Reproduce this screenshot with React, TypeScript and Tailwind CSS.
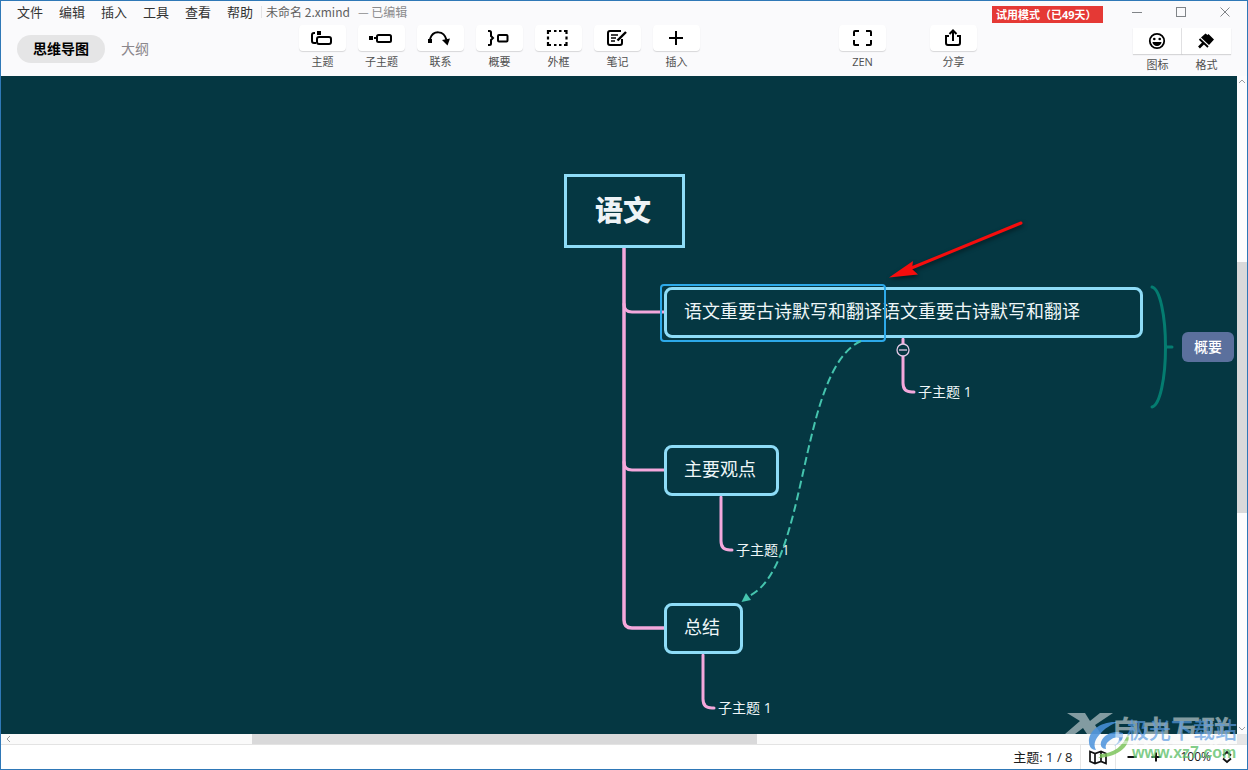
import { useState } from "react";
import type { ReactNode } from "react";
import { clsx } from "clsx";

// ── Data ───────────────────────────────────────────────────────
const MENUS = ["文件", "编辑", "插入", "工具", "查看", "帮助"];

const TOOLS: { label: string; icon: ReactNode }[] = [
  {
    label: "主题",
    icon: (
      <>
        <rect x="7" y="2" width="4" height="4" fill="currentColor" stroke="none" />
        <path d="M5 4H4a2 2 0 0 0-2 2v6a2 2 0 0 0 2 2h2" />
        <rect x="7" y="8" width="14" height="7" rx="2" />
      </>
    ),
  },
  {
    label: "子主题",
    icon: (
      <>
        <rect x="0" y="7" width="4" height="4" fill="currentColor" stroke="none" />
        <path d="M5 9h2" />
        <rect x="8" y="6" width="14" height="7" rx="1.5" />
      </>
    ),
  },
  {
    label: "联系",
    icon: (
      <>
        <rect x="0" y="10" width="4" height="4" fill="currentColor" stroke="none" />
        <path d="M2 10C5 1 16 1 18.500 11" />
        <path d="M14 11l8-1.500-2.500 7z" fill="currentColor" stroke="none" />
      </>
    ),
  },
  {
    label: "概要",
    icon: (
      <>
        <path d="M1 2h1.500a1.500 1.500 0 0 1 1.500 1.500v3.500l2 2-2 2v3.500a1.500 1.500 0 0 1-1.500 1.500H1" />
        <rect x="11" y="6" width="9.500" height="6.500" rx="1" />
      </>
    ),
  },
  {
    label: "外框",
    icon: (
      <path
        strokeWidth="2.200"
        d="M2 5V2h3M8 2h2.500M13 2h2.500M18 2h2.500v3M20.500 7.500v3M20.500 13v3h-2.500M15.500 16H13M10.500 16H8M5 16H2v-3M2 10.500v-3"
      />
    ),
  },
  {
    label: "笔记",
    icon: (
      <>
        <path d="M16 2H5a2 2 0 0 0-2 2v10a2 2 0 0 0 2 2h10a2 2 0 0 0 2-2v-4" />
        <path d="M6 6h7M6 9h5M6 12h4" strokeWidth="1.600" />
        <path d="M12.500 11.500L21 3" strokeWidth="2.400" />
      </>
    ),
  },
  { label: "插入", icon: <path d="M12 2v14M5 9h14" /> },
];

const VIEW_TOOLS: { label: string; icon: ReactNode }[] = [
  {
    label: "ZEN",
    icon: (
      <path d="M4 7V3a1 1 0 0 1 1-1h4M16 2h4a1 1 0 0 1 1 1v4M21 11v4a1 1 0 0 1-1 1h-4M9 16H5a1 1 0 0 1-1-1v-4" />
    ),
  },
  {
    label: "分享",
    icon: (
      <>
        <path d="M8 7H5v7a2 2 0 0 0 2 2h10a2 2 0 0 0 2-2V7h-3" />
        <path d="M12 12V2M8.500 5L12 1.500 15.500 5" />
      </>
    ),
  },
];

const PANELS: { label: string; icon: ReactNode }[] = [
  {
    label: "图标",
    icon: (
      <>
        <circle cx="12" cy="9" r="7.200" strokeWidth="1.800" />
        <circle cx="9.300" cy="7" r="1.300" fill="currentColor" stroke="none" />
        <circle cx="14.700" cy="7" r="1.300" fill="currentColor" stroke="none" />
        <path d="M7.500 10h9a4.500 4 0 0 1-9 0z" fill="currentColor" stroke="none" />
      </>
    ),
  },
  {
    label: "格式",
    icon: (
      <>
        <path
          d="M11.500 1.500l2 1.500 1-1 5.500 5.500-5 5.500-8-7.500z"
          fill="currentColor"
          stroke="none"
        />
        <path d="M5.500 7l8.500 8" strokeWidth="1.800" />
        <path d="M9.500 11L5 15.500" strokeWidth="2.600" />
      </>
    ),
  },
];

// ── Header pieces ──────────────────────────────────────────────
function Glyph({ children }: { children: ReactNode }) {
  return (
    <svg
      width="24"
      height="18"
      viewBox="0 0 24 18"
      fill="none"
      stroke="currentColor"
      strokeWidth="2"
      className="overflow-visible"
      aria-hidden="true"
    >
      {children}
    </svg>
  );
}

function ToolButton({ label, icon }: { label: string; icon: ReactNode }) {
  return (
    <button type="button" className="flex w-[47px] flex-col items-center gap-[3px]">
      <span className="flex h-[26px] w-full items-center justify-center rounded-sm bg-white pr-px text-black shadow-[0_1px_1px_rgba(0,0,0,0.14)]">
        <Glyph>{icon}</Glyph>
      </span>
      <span className="text-[11px] leading-4 text-[#505050]">{label}</span>
    </button>
  );
}

function TitleBar() {
  return (
    <div className="flex h-[22px] items-center pl-4">
      <nav className="flex gap-4">
        {MENUS.map((m) => (
          <button key={m} type="button" className="text-[13px] leading-5 text-[#333]">
            {m}
          </button>
        ))}
      </nav>
      <div className="ml-2 flex gap-2 border-l border-[#e4e4e6] pl-1 font-['Noto_Sans_CJK_SC',sans-serif] text-[12px] leading-3">
        <span className="text-[#606060]">未命名 2.xmind</span>
        <span className="text-[#8b8b8d]">— 已编辑</span>
      </div>
      <div className="ml-auto flex items-center self-stretch">
        <span className="mt-1 mr-3 h-[17px] w-[111px] bg-[#e53935] pl-1 text-[11px] leading-[17px] font-bold whitespace-nowrap text-white">
          试用模式（已49天）
        </span>
        <button type="button" aria-label="最小化" className="flex w-11 justify-center">
          <svg width="10" height="10" stroke="#808488" fill="none">
            <path d="M0 5.500h10" />
          </svg>
        </button>
        <button type="button" aria-label="最大化" className="flex w-11 justify-center">
          <svg width="10" height="10" stroke="#808488" fill="none">
            <rect x="0.500" y="0.500" width="9" height="9" />
          </svg>
        </button>
        <button type="button" aria-label="关闭" className="flex w-11 justify-center">
          <svg width="10" height="10" stroke="#808488" fill="none">
            <path d="M0.500 0.500l9 9M9.500 0.500l-9 9" />
          </svg>
        </button>
      </div>
    </div>
  );
}

function Toolbar() {
  const [view, setView] = useState<"map" | "outline">("map");
  const tab = (active: boolean) =>
    clsx(
      "h-7 rounded-full px-4 text-[14px] leading-7",
      active ? "bg-[#e5e5e6] font-bold text-black" : "text-[#8b878c]",
    );

  return (
    <div className="flex h-[53px] items-start pr-4 pl-4">
      <div className="flex w-[282px] shrink-0 pt-3">
        <button type="button" className={tab(view === "map")} onClick={() => setView("map")}>
          思维导图
        </button>
        <button
          type="button"
          className={tab(view === "outline")}
          onClick={() => setView("outline")}
        >
          大纲
        </button>
      </div>
      <div className="flex gap-3 pt-[2px]">
        {TOOLS.map((t) => (
          <ToolButton key={t.label} {...t} />
        ))}
      </div>
      <div className="ml-auto flex gap-11 pt-[2px]">
        {VIEW_TOOLS.map((t) => (
          <ToolButton key={t.label} {...t} />
        ))}
      </div>
      <div className="ml-[156px] flex pt-[5px]">
        {PANELS.map((p) => (
          <button
            key={p.label}
            type="button"
            className="group flex w-[49px] flex-col items-center gap-[3px]"
          >
            <span className="flex h-[26px] w-full items-center justify-center border-[#e6e6e8] bg-white pr-px text-black shadow-[0_1px_1px_rgba(0,0,0,0.14)] group-first:border-r group-first:pr-0">
              <Glyph>{p.icon}</Glyph>
            </span>
            <span className="text-[11px] leading-4 text-[#505050]">{p.label}</span>
          </button>
        ))}
      </div>
    </div>
  );
}

// ── Mind map ───────────────────────────────────────────────────
const TOPIC =
  "absolute flex h-[51px] items-center rounded-lg border-3 border-[#8edcf7] px-[17px] pb-[3px] text-[18px] leading-6 whitespace-nowrap text-[#eef6f8]";
const SUBTOPIC =
  "absolute text-[14px] leading-5 whitespace-nowrap text-[#eef6f8]";

function MindMap() {
  return (
    <main className="relative min-w-0 flex-1 overflow-hidden bg-[#053742]">
      <svg className="absolute inset-0 h-full w-full" fill="none" aria-hidden="true">
        {/* branches */}
        <g stroke="#f4a8dc" strokeWidth="3" strokeLinecap="round">
          <path d="M623 171v373q0 8 8 8h32" strokeWidth="3.500" />
          <path d="M623 228q0 8 8 8h32M623 386q0 8 8 8h32" />
          <path d="M902 263v44q0 9 9 9h2" />
          <path d="M720 421v44q0 9 9 9h2" />
          <path d="M702 579v44q0 9 9 9h2" />
        </g>
        {/* summary brace */}
        <path
          d="M1151 211C1159 213 1164.500 240 1164.500 271S1159 329 1151 331M1165 271h6"
          stroke="#047c70"
          strokeWidth="3"
          strokeLinecap="round"
        />
      </svg>

      <div className="absolute top-[98px] left-[563px] flex h-[74px] w-[121px] items-center justify-center border-3 border-[#8edcf7] pr-[3px] pb-[3px] text-[28px] leading-9 font-black text-[#eef3f6]">
        语文
      </div>
      <div className={clsx(TOPIC, "top-[211px] left-[663px] w-[479px]")}>
        语文重要古诗默写和翻译语文重要古诗默写和翻译
      </div>
      <div className={clsx(TOPIC, "top-[369px] left-[663px] w-[115px]")}>主要观点</div>
      <div className={clsx(TOPIC, "top-[527px] left-[663px] w-[79px]")}>总结</div>

      <div className={clsx(SUBTOPIC, "top-[306px] left-[917px]")}>子主题 1</div>
      <div className={clsx(SUBTOPIC, "top-[464px] left-[735px]")}>子主题 1</div>
      <div className={clsx(SUBTOPIC, "top-[622px] left-[717px]")}>子主题 1</div>

      <div className="absolute top-[256px] left-[1181px] flex h-[30px] w-[52px] items-center justify-center rounded-md bg-[#5b709d] text-[14px] leading-5 font-medium text-white">
        概要
      </div>

      {/* selection frame */}
      <div className="absolute top-[208px] left-[659px] h-[58px] w-[226px] rounded border-2 border-[#2da9e9]" />

      <svg
        className="pointer-events-none absolute inset-0 h-full w-full"
        fill="none"
        aria-hidden="true"
      >
        {/* relationship */}
        <path
          d="M860 265C797 294 808 492 748 520"
          stroke="#45c4ae"
          strokeWidth="2"
          strokeDasharray="8 4"
        />
        <path d="M740.500 526l4.500-9 5 7z" fill="#45c4ae" />
        {/* fold toggle */}
        <circle cx="902" cy="274" r="6" fill="#053742" stroke="#e3c9e6" strokeWidth="1.300" />
        <path d="M898 274h8" stroke="#e3c9e6" strokeWidth="1.300" />
        {/* red pointer */}
        <g className="drop-shadow-[1px_2px_2px_rgba(0,0,0,0.5)]">
          <path d="M1020 147L908 193" stroke="#f50d0d" strokeWidth="3" strokeLinecap="round" />
          <path d="M888 201.500l24-16.500-1 8 6 5.500z" fill="#f50d0d" />
        </g>
      </svg>
    </main>
  );
}

function Chevron({ d }: { d: string }) {
  return (
    <svg width="10" height="10" fill="none" stroke="#9a9da1" className="shrink-0">
      <path d={d} />
    </svg>
  );
}

function VerticalScroll() {
  return (
    <div className="flex w-[10px] shrink-0 flex-col bg-[#fcfcfd]">
      <Chevron d="M2 7l3-3 3 3" />
      <div className="flex-[176]" />
      <div className="flex-[251] bg-[#d9d9da]" />
      <div className="flex-[211]" />
      <Chevron d="M2 3l3 3 3-3" />
    </div>
  );
}

function HorizontalScroll() {
  return (
    <div className="flex h-[10px] shrink-0 bg-[#fafafa]">
      <span className="w-3 pl-[2px]">
        <Chevron d="M7 2L4 5l3 3" />
      </span>
      <div className="flex-[239]" />
      <div className="flex-[505] bg-[#d9d9da]" />
      <div className="flex-[480]" />
      <div className="w-[10px] bg-[#e6e6e7]" />
    </div>
  );
}

// ── Status bar ─────────────────────────────────────────────────
function StatusBar() {
  return (
    <footer className="flex h-[25px] shrink-0 items-center justify-end border-t border-[#e3e3e3] bg-white pr-[14px] text-[13px] leading-5 text-[#1c1c1c]">
      <span className="pr-2">主题: 1 / 8</span>
      <button
        type="button"
        aria-label="导航图"
        className="flex h-full w-9 items-center justify-center border-x border-[#e6e6e6]"
      >
        <svg width="18" height="16" fill="none" stroke="#111" strokeWidth="1.700">
          <path d="M1 2.500l5 2 6-2 5 2v10l-5-2-6 2-5-2zM6 4.500v10M12 2.500v10" />
        </svg>
      </button>
      <button type="button" aria-label="缩小" className="ml-1 flex w-6 justify-center">
        <svg width="10" height="10" stroke="#111" strokeWidth="2">
          <path d="M0.500 5h9" />
        </svg>
      </button>
      <button type="button" aria-label="放大" className="flex w-6 justify-center">
        <svg width="10" height="10" stroke="#111" strokeWidth="2">
          <path d="M0.500 5h9M5 0.500v9" />
        </svg>
      </button>
      <button type="button" className="ml-3 flex items-center gap-[10px] text-[12px]">
        100%
        <svg width="12" height="14" fill="none" stroke="#111" strokeWidth="1.800">
          <path d="M2 5.500L6 2l4 3.500M2 8.500L6 12l4-3.500" />
        </svg>
      </button>
    </footer>
  );
}

// Site marks printed over the bottom right corner
function Watermark() {
  return (
    <div className="pointer-events-none absolute right-0 bottom-0 h-[60px] w-[184px] whitespace-nowrap">
      <svg className="absolute inset-0 h-full w-full" fill="none" aria-hidden="true">
        <path
          d="M4 4h18l5 8 10-8h13L32 16l6 9H24l-4-6-8 6H2l15-13z"
          fill="#fff"
          opacity="0.5"
        />
        <path
          d="M54 13C38 12 25 22 26 33c0 5 3 8 7 8-3-5-1-11 4-16 5-6 11-9 17-12z"
          fill="#4a92dc"
          opacity="0.85"
        />
        <path
          d="M60 24c-9-3-19 1-22 9-1 4 1 7 5 7-1-3 0-6 3-8 4-4 8-4 10-3 0 3-2 6-5 8 6-2 10-7 9-13z"
          fill="#4a92dc"
          opacity="0.85"
        />
        <path
          d="M65 24c4 11-8 24-30 25 3-1 3-3 1-4 14 0 25-8 29-21z"
          fill="#7cc45c"
          opacity="0.85"
        />
      </svg>
      <span className="absolute top-1 left-12 text-[30px] leading-9 font-bold text-white/50">
        自由互联
      </span>
      <span className="absolute top-2 left-16 text-[22px] leading-6 font-medium text-[#5c9be0]/70">
        极光下载站
      </span>
      <span className="absolute top-[34px] left-[69px] font-['Liberation_Sans',sans-serif] text-[16px] leading-5 font-bold text-[#5fbf6a]/80">
        www.xz7.com
      </span>
    </div>
  );
}

export default function App() {
  return (
    <div className="relative flex h-screen flex-col overflow-hidden border border-[#2f78b7] bg-white font-['Open_Sans','Noto_Sans_CJK_SC',sans-serif]">
      <header className="shrink-0 bg-[#fafafc]">
        <TitleBar />
        <Toolbar />
      </header>
      <div className="flex min-h-0 flex-1">
        <MindMap />
        <VerticalScroll />
      </div>
      <HorizontalScroll />
      <StatusBar />
      <Watermark />
    </div>
  );
}
